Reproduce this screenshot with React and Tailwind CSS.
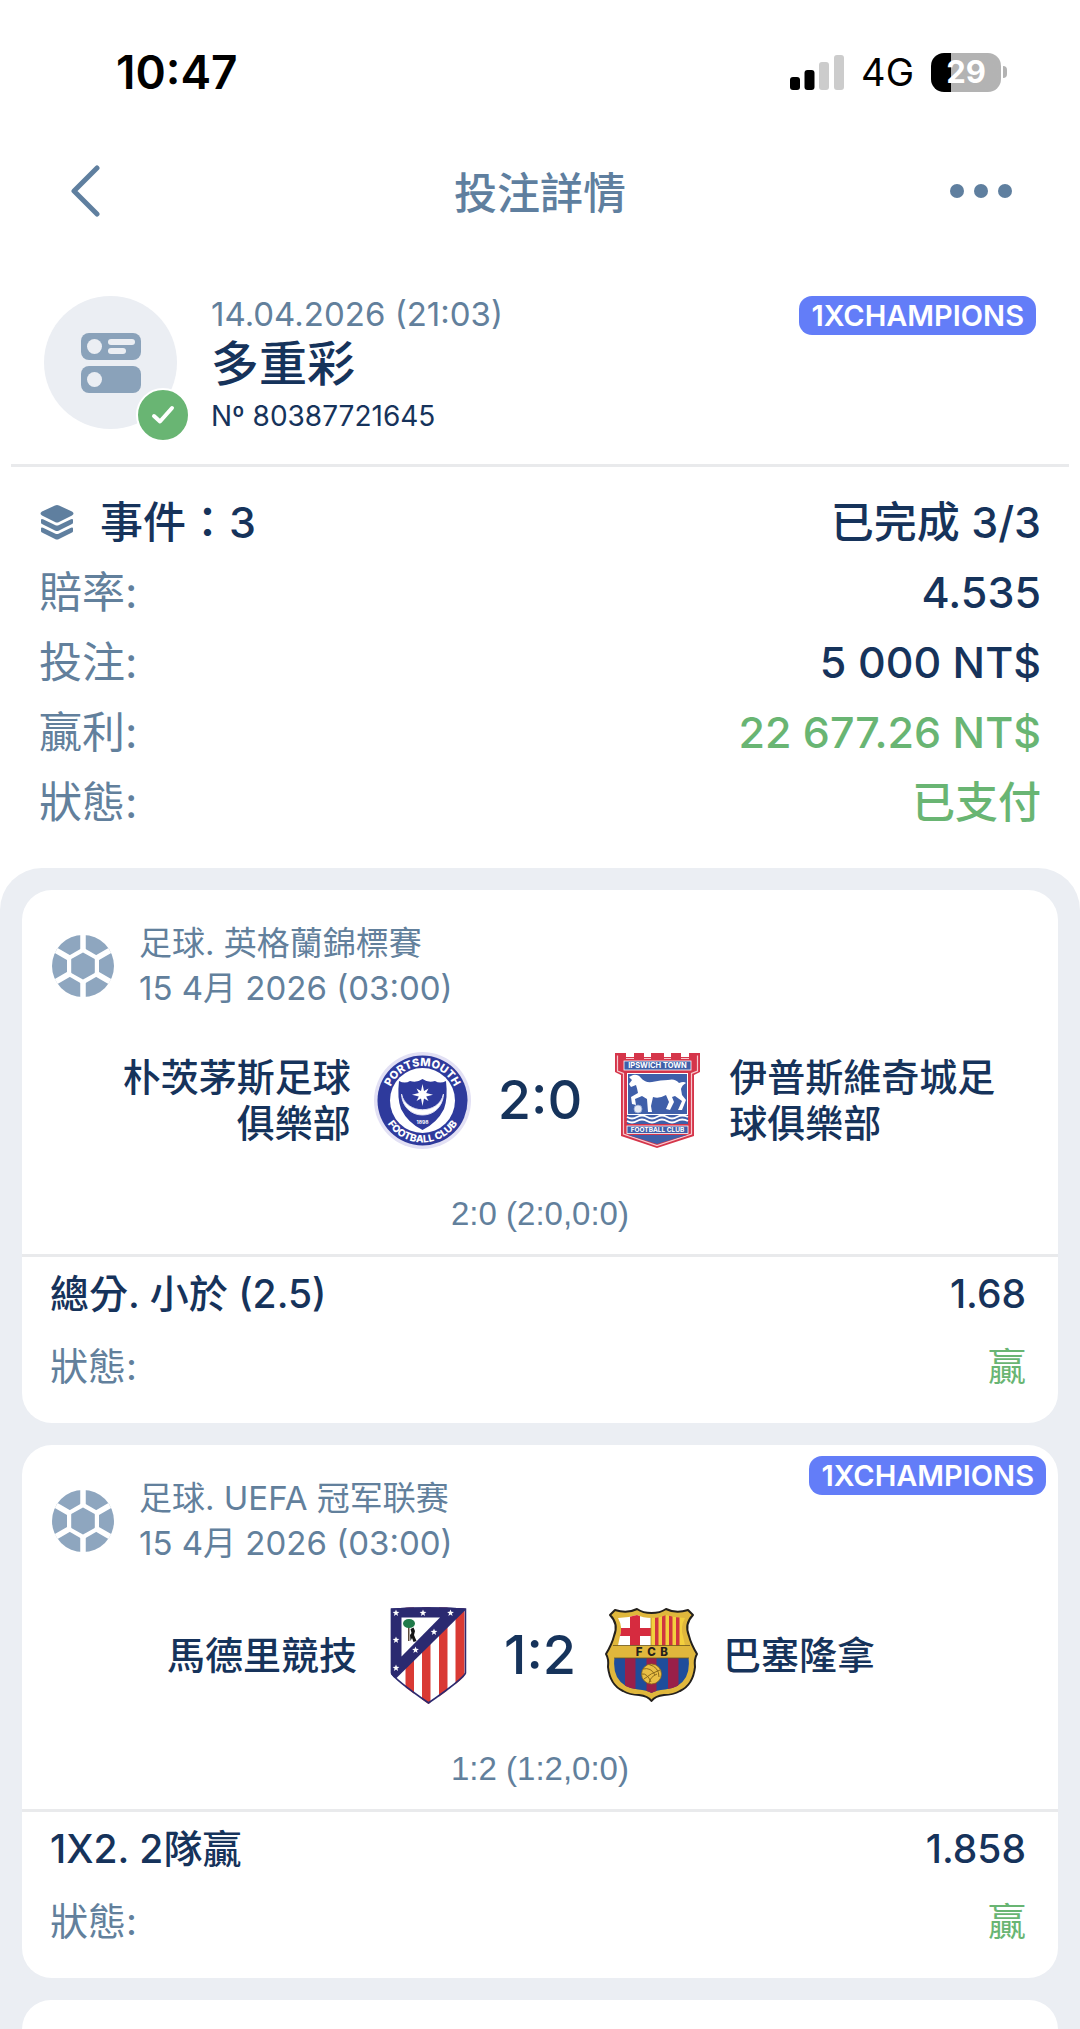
const PortsmouthCrest = () => (
  <svg viewBox="0 0 97 97" className="w-[97px] h-[97px]" role="img" aria-label="Portsmouth">
    <defs>
      <path id="pfc-top" d="M14 48.5 A34.5 34.5 0 0 1 83 48.5" />
      <path id="pfc-bottom" d="M6.5 48.5 A42 42 0 0 0 90.5 48.5" />
    </defs>
    <circle cx="48.5" cy="48.5" r="48.5" fill="#e2e0f4" />
    <circle cx="48.5" cy="48.5" r="45" fill="#2e3a9c" />
    <circle cx="48.5" cy="48.5" r="32.5" fill="#fff" />
    <g fill="#fff" fontFamily="Inter, sans-serif" fontWeight="800" textAnchor="middle">
      <text fontSize="11">
        <textPath href="#pfc-top" startOffset="50%">PORTSMOUTH</textPath>
      </text>
      <text fontSize="10">
        <textPath href="#pfc-bottom" startOffset="50%">FOOTBALL CLUB</textPath>
      </text>
    </g>
    <path d="M25 29 Q31 32 36 29 Q43 31 48.5 27 Q54 31 61 29 Q66 32 72 29 Q74 46 70 57 Q63 71 48.5 78 Q34 71 27 57 Q23 46 25 29Z" fill="#2e3a9c" />
    <path d="M27.5 42 C29 70 68 70 69.5 42 C65 63 32 63 27.5 42Z" fill="#fff" stroke="#dcdcf2" strokeWidth="1" />
    <path d="M48.5 32 L50 39 L54.5 36.5 L52.2 41 L59 42.7 L52.2 44.4 L54.5 49 L50 46.4 L48.5 54 L47 46.4 L42.5 49 L44.8 44.4 L38 42.7 L44.8 41 L42.5 36.5 L47 39Z" fill="#fff" />
    <text x="48.5" y="72" fontSize="5" fontWeight="700" fill="#fff" textAnchor="middle" fontFamily="Inter, sans-serif">1898</text>
  </svg>
);

const IpswichCrest = () => (
  <svg viewBox="0 0 97 97" className="w-[97px] h-[97px]" role="img" aria-label="Ipswich Town">
    <g transform="translate(5 0)">
      <path
        d="M1 1 H12 V5 H20 V1 H30 V5 H37 V1 H50 V5 H57 V1 H67 V5 H75 V1 H86 V20 L80 23 V84 L43 96 L7 84 V23 L1 20Z"
        fill="#d5354a"
      />
      <path d="M3.500 3.500 V19 L9.500 21.500 V82 L43 93.500 L77.500 82 V21.500 L83.500 19 V3.500" fill="none" stroke="#f7c9cf" strokeWidth="1.200" />
      <path d="M12 6.500 H20 M30 6.500 H37 M50 6.500 H57 M67 6.500 H75" stroke="#f7c9cf" strokeWidth="1.200" />
      <rect x="10" y="9" width="67" height="9" fill="#3f5fa9" stroke="#fff" strokeWidth="0.800" />
      <rect x="13.500" y="21.500" width="60" height="41" fill="#3f5fa9" stroke="#fff" strokeWidth="1" />
      <path
        d="M15 25 L19 23 Q24 22 27 26 Q31 31 38 30 Q47 28 54 28 Q61 26 65 31 Q70 29 72 31 Q68 33 67 37 L68 43 L72 48 L68 58 L64 58 L68 49 L61 44 L58 45 L60 50 L56 58 L52 57 L55 50 L52 43 Q45 47 39 45 L37 54 L38 60 L34 60 L33 47 L28 44 L21 47 L22 53 L18 52 L17 45 L24 41 Q23 36 22 33 L17 35 L15 32 L18 28Z"
        fill="#fff"
      />
      <circle cx="24" cy="57" r="4" fill="#e6ebf6" stroke="#8ea3d0" strokeWidth="0.800" />
      <rect x="13" y="63" width="61" height="9" fill="#3f5fa9" />
      <path d="M13 65 q5 3 10 0 t10 0 t10 0 t10 0 t10 0 t11 0 M13 69 q5 3 10 0 t10 0 t10 0 t10 0 t10 0 t11 0" fill="none" stroke="#fff" strokeWidth="1.800" />
      <rect x="13" y="74" width="61" height="7.500" fill="#3f5fa9" stroke="#fff" strokeWidth="0.800" />
      <path d="M14 83 H73 L43 92Z" fill="#3f5fa9" />
      <g fill="#fff" fontFamily="Inter, sans-serif" fontWeight="700" textAnchor="middle">
        <text x="43.500" y="16.200" fontSize="7.500">IPSWICH TOWN</text>
        <text x="43.500" y="80" fontSize="6.500">FOOTBALL CLUB</text>
      </g>
    </g>
  </svg>
);

const ATLETICO_STARS = [[5.5, 6], [32.5, 6], [60, 6], [5.5, 33], [5.5, 61], [43.5, 25], [25, 43]];

const AtleticoCrest = () => (
  <svg viewBox="0 0 97 97" className="w-[97px] h-[97px]" role="img" aria-label="Atlético">
    <g transform="translate(10.500 0)">
      <clipPath id="atm-shape">
        <path d="M0 1.500 Q38 -1 76 1.500 V66 Q74 72 38 97 Q2 72 0 66Z" />
      </clipPath>
      <g clipPath="url(#atm-shape)">
        <rect width="76" height="97" fill="#fff" />
        <path d="M15 0 h8.500 v97 h-8.500z M31.500 0 h8.500 v97 h-8.500z M48.500 0 h8.500 v97 h-8.500z M65 0 h9 v97 h-9z" fill="#d93a34" />
        <path d="M0 0 H76 V2 L6 71 L0 70Z" fill="#2b2a70" />
        <path d="M11 10.500 H49.500 L11 49.500Z" fill="#fff" />
        <path d="M0 1.500 Q38 -1 76 1.500 V66 Q74 72 38 97 Q2 72 0 66Z" fill="none" stroke="#2b2a70" strokeWidth="3.500" />
      </g>
      <path d="M17.500 18 h1.500 v16 h-1.500z" fill="#5b4a3a" />
      <ellipse cx="18.500" cy="16.500" rx="6" ry="4.500" fill="#1f7a4a" />
      <path d="M20 22 L23 20.500 L24.500 24 L23.500 28 L26 34 L23 35 L21.500 31 L20 34 L19.500 28 L21 26Z" fill="#151515" />
      {ATLETICO_STARS.map(([x, y]) => (
        <path
          key={`${x}-${y}`}
          transform={`translate(${x} ${y})`}
          d="M0 -3.500 L0.900 -1.200 L3.400 -1.100 L1.400 0.500 L2.100 2.900 L0 1.500 L-2.100 2.900 L-1.400 0.500 L-3.400 -1.100 L-0.900 -1.200Z"
          fill="#fff"
        />
      ))}
    </g>
  </svg>
);

const BarcelonaCrest = () => (
  <svg viewBox="0 0 97 97" className="w-[97px] h-[97px]" role="img" aria-label="Barcelona">
    <g transform="translate(2 0)">
      <path
        d="M5 8 L10 3 Q22 7 32 2 Q38 6 46.500 6 Q55 6 61 2 Q71 7 83 3 L88 8 Q79 17 84 29 Q86 37 92 47 Q89 52 90 60 Q88 78 75 84 Q68 88 59 88 Q50 89 46.500 94 Q43 89 34 88 Q25 88 18 84 Q5 78 3 60 Q4 52 1 47 Q7 37 9 29 Q14 17 5 8Z"
        fill="#e0b73c"
        stroke="#24211d"
        strokeWidth="2"
        strokeLinejoin="round"
      />
      <clipPath id="fcb-top">
        <path d="M13 11 Q23 11 32 8 Q38 11 46.500 11 Q55 11 61 8 Q70 11 80 11 Q75 20 78 29 L80 38.500 H13 L15 29 Q18 20 13 11Z" />
      </clipPath>
      <clipPath id="fcb-low">
        <path d="M9.500 51 H83.500 Q85 62 81 70 Q75 81 60 82.500 Q51 83 46.500 86 Q42 83 33 82.500 Q18 81 12 70 Q8 62 9.500 51Z" />
      </clipPath>
      <g clipPath="url(#fcb-top)">
        <rect width="46" height="40" fill="#fff" />
        <path d="M25 0 h10 v40 h-10z M12 21 h34 v8 h-34z" fill="#d62b3f" />
        <rect x="46" width="40" height="40" fill="#f3cf3d" />
        <path d="M50 0 h3.500 v40 h-3.500z M57 0 h3.500 v40 h-3.500z M64 0 h3.500 v40 h-3.500z M71 0 h3.500 v40 h-3.500z" fill="#cf3540" />
        <path d="M46 0 V40" stroke="#a98523" strokeWidth="0.800" />
      </g>
      <g clipPath="url(#fcb-low)">
        <rect y="50" width="93" height="40" fill="#1f4d9b" />
        <path d="M20 50 h10.500 v40 h-10.500z M41.500 50 h10 v40 h-10z M63 50 h10.500 v40 h-10.500z" fill="#992049" />
      </g>
      <path d="M8 38.500 H85 M9 51 H84" stroke="#6b571d" strokeWidth="0.800" />
      <g fill="#24211d" fontFamily="Inter, sans-serif" fontWeight="800" fontSize="11.500" textAnchor="middle">
        <text x="34" y="49">F</text>
        <text x="46.500" y="49">C</text>
        <text x="59" y="49">B</text>
      </g>
      <circle cx="46.500" cy="67" r="10" fill="#e9bf45" stroke="#8a6a1c" strokeWidth="0.800" />
      <path d="M38 62 Q46 60 50 68 M44 57.500 Q54 60 54 70 M39 72 Q46 66 55 63 M44 76 Q45 70 52 67 M37 67 Q42 66 46 75" fill="none" stroke="#8a6a1c" strokeWidth="1" />
    </g>
  </svg>
);

const BallIcon = () => (
  <svg viewBox="0 0 62 62" className="w-[62px] h-[62px] shrink-0" aria-hidden="true">
    <circle cx="31" cy="31" r="31" fill="#8ea6bf" />
    <path d="M31 0 V62 M4.200 15.500 L57.800 46.500 M4.200 46.500 L57.800 15.500" stroke="#fff" strokeWidth="5.500" />
    <path d="M31 12.500 L47 21.800 V40.200 L31 49.500 L15 40.200 V21.800Z" fill="#fff" />
    <path d="M31 18.500 L41.800 24.700 V37.300 L31 43.500 L20.200 37.300 V24.700Z" fill="#8ea6bf" strokeLinejoin="round" stroke="#8ea6bf" strokeWidth="2" />
  </svg>
);

const Badge = () => (
  <span className="flex h-[39px] items-center rounded-[13px] bg-[#637df8] px-[12px] text-[29px] font-semibold text-white">
    1XCHAMPIONS
  </span>
);

const StatusBar = () => (
  <div className="flex h-[144px] items-center justify-between pl-[116px] pr-[73px] text-black">
    <span className="text-[46px] font-semibold">10:47</span>
    <div className="flex items-center gap-[17px]">
      <svg viewBox="0 0 54 35" className="w-[54px] h-[35px]" aria-hidden="true">
        <rect x="0" y="22" width="10" height="13" rx="3" />
        <rect x="14.500" y="15" width="10" height="20" rx="3" />
        <rect x="29" y="7" width="10" height="28" rx="3" fill="#cccccc" />
        <rect x="44" y="0" width="10" height="35" rx="3" fill="#cccccc" />
      </svg>
      <span className="text-[38px]">4G</span>
      <div className="flex items-center gap-[2px]">
        <div className="flex h-[39px] w-[70px] items-center justify-center rounded-[13px] bg-linear-to-r from-black from-29% to-[#b3b3b3] to-29% text-[31px] font-bold text-white">
          29
        </div>
        <span className="h-[12px] w-[4px] rounded-r-full bg-[#b3b3b3]" />
      </div>
    </div>
  </div>
);

const SUMMARY = [
  { label: '賠率:', value: '4.535' },
  { label: '投注:', value: '5 000 NT$' },
  { label: '贏利:', value: '22 677.26 NT$', green: true },
  { label: '狀態:', value: '已支付', green: true },
];

const EVENTS = [
  {
    league: '足球. 英格蘭錦標賽',
    date: '15 4月 2026 (03:00)',
    home: '朴茨茅斯足球\n俱樂部',
    away: '伊普斯維奇城足\n球俱樂部',
    HomeCrest: PortsmouthCrest,
    AwayCrest: IpswichCrest,
    score: '2:0',
    periods: '2:0 (2:0,0:0)',
    bet: '總分. 小於 (2.5)',
    odds: '1.68',
  },
  {
    league: '足球. UEFA 冠军联赛',
    date: '15 4月 2026 (03:00)',
    home: '馬德里競技',
    away: '巴塞隆拿',
    HomeCrest: AtleticoCrest,
    AwayCrest: BarcelonaCrest,
    score: '1:2',
    periods: '1:2 (1:2,0:0)',
    bet: '1X2. 2隊贏',
    odds: '1.858',
    badge: true,
  },
];

const EventCard = ({ event }) => {
  const { HomeCrest, AwayCrest } = event;
  return (
    <article className="relative shrink-0 rounded-[30px] bg-white pb-[20px]">
      {event.badge && (
        <div className="absolute right-[12px] top-[11px]">
          <Badge />
        </div>
      )}

      <header className="flex items-center gap-[25px] px-[30px] pt-[31px] text-[33px] leading-[45px] text-[#62809c]">
        <BallIcon />
        <div>
          <h2>{event.league}</h2>
          <p>{event.date}</p>
        </div>
      </header>

      <div className="mt-[32px] flex h-[114px] items-center text-[38px] font-medium leading-[46px]">
        <div className="flex flex-1 items-center justify-end gap-[23px]">
          <span className="whitespace-pre-line text-right">{event.home}</span>
          <HomeCrest />
        </div>
        <span className="px-[27px] text-[54px]">{event.score}</span>
        <div className="flex flex-1 items-center gap-[23px]">
          <AwayCrest />
          <span className="whitespace-pre-line">{event.away}</span>
        </div>
      </div>

      <p className="mt-[34px] border-b-3 border-[#e9eaec] pb-[18px] text-center font-[Liberation_Sans] text-[33px] leading-[45px] text-[#62809c]">
        {event.periods}
      </p>

      <dl className="pl-[28px] pr-[32px] text-[38px] leading-[73px]">
        <div className="flex justify-between text-[39px] font-medium">
          <dt>{event.bet}</dt>
          <dd>{event.odds}</dd>
        </div>
        <div className="flex justify-between">
          <dt className="text-[#62809c]">狀態:</dt>
          <dd className="text-[#69b573]">贏</dd>
        </div>
      </dl>
    </article>
  );
};

const App = () => {
  return (
    <main className="flex h-screen flex-col overflow-hidden bg-white font-[Inter,'Noto_Sans_CJK_TC',sans-serif] text-[#16335b]">
      <StatusBar />

      <nav className="flex h-[98px] items-center justify-between px-[68px] text-[#5f7f9f]">
        <button type="button" aria-label="返回" className="w-[62px] pb-1">
          <svg viewBox="0 0 34 52" className="w-[34px] h-[52px]" fill="none" stroke="currentColor" strokeWidth="5" strokeLinecap="round" strokeLinejoin="round">
            <path d="M29 3 L6 26 L29 49" />
          </svg>
        </button>
        <h1 className="text-[43px] font-medium">投注詳情</h1>
        <button type="button" aria-label="更多" className="w-[62px] pb-1">
          <svg viewBox="0 0 62 14" className="w-[62px] h-[14px]" fill="currentColor">
            <circle cx="7" cy="7" r="7" />
            <circle cx="31" cy="7" r="7" />
            <circle cx="55" cy="7" r="7" />
          </svg>
        </button>
      </nav>

      <section className="mx-[11px] flex items-start gap-[34px] border-b-3 border-[#e9eaec] pb-[28px] pl-[33px] pr-[33px] pt-[54px]">
        <div className="relative flex h-[133px] w-[133px] items-center justify-center rounded-full bg-[#ebeef3]">
          <svg viewBox="0 0 60 60" className="w-[60px] h-[60px]" aria-hidden="true">
            <rect width="60" height="27" rx="8" fill="#8aa2ba" />
            <rect y="33" width="60" height="27" rx="8" fill="#8aa2ba" />
            <g fill="#ebeef3">
              <circle cx="13.500" cy="13.500" r="7.500" />
              <circle cx="13.500" cy="46.500" r="7.500" />
              <rect x="27" y="6" width="27" height="6" rx="3" />
              <rect x="27" y="15" width="18" height="6" rx="3" />
            </g>
          </svg>
          <div className="absolute -bottom-[13px] -right-[13px] flex h-[54px] w-[54px] items-center justify-center rounded-full border-2 border-white bg-[#69b573]">
            <svg viewBox="0 0 24 20" className="w-[24px] h-[20px]" fill="none" stroke="#fff" strokeWidth="4" strokeLinecap="round" strokeLinejoin="round">
              <path d="M3 11 L9 16.500 L21 3" />
            </svg>
          </div>
        </div>
        <div className="flex-1">
          <p className="text-[33px] leading-[36px] text-[#62809c]">14.04.2026 (21:03)</p>
          <h2 className="text-[48px] font-medium leading-[64px]">多重彩</h2>
          <p className="text-[28px] leading-[40px]">Nº 80387721645</p>
        </div>
        <Badge />
      </section>

      <dl className="mb-[31px] px-[39px] pt-[20px] text-[43px] leading-[70px]">
        <div className="flex items-center justify-between font-medium">
          <dt className="flex items-center gap-[25px]">
            <svg viewBox="0 0 36 36" className="w-[36px] h-[36px]" fill="#5f7f9f" aria-hidden="true">
              <path d="M18 1 Q19 1 20 1.500 L33 7.500 Q36 9.500 33 11.500 L20 18 Q18 19 16 18 L3 11.500 Q0 9.500 3 7.500 L16 1.500 Q17 1 18 1Z" />
              <path d="M2 16 Q2 14.500 4 15.200 L16 21 Q18 22 20 21 L32 15.200 Q34 14.500 34 16 V18.500 Q34 19.500 33 20 L20 26.500 Q18 27.500 16 26.500 L3 20 Q2 19.500 2 18.500Z" />
              <path d="M2 24.500 Q2 23 4 23.700 L16 29.500 Q18 30.500 20 29.500 L32 23.700 Q34 23 34 24.500 V27 Q34 28 33 28.500 L20 35 Q18 36 16 35 L3 28.500 Q2 28 2 27Z" />
            </svg>
            事件：3
          </dt>
          <dd>已完成 3/3</dd>
        </div>
        {SUMMARY.map((row) => (
          <div key={row.label} className="flex justify-between">
            <dt className="text-[#62809c]">{row.label}</dt>
            <dd className={row.green ? 'font-medium text-[#69b573]' : 'font-medium'}>{row.value}</dd>
          </div>
        ))}
      </dl>

      <section className="flex flex-1 flex-col gap-[22px] rounded-t-[42px] bg-[#ebeef3] px-[22px] pt-[22px]">
        {EVENTS.map((event) => (
          <EventCard key={event.league} event={event} />
        ))}
        {/* next event, cut off by the bottom edge */}
        <div className="flex-1 rounded-t-[30px] bg-white" />
      </section>
    </main>
  );
};

export default App;
